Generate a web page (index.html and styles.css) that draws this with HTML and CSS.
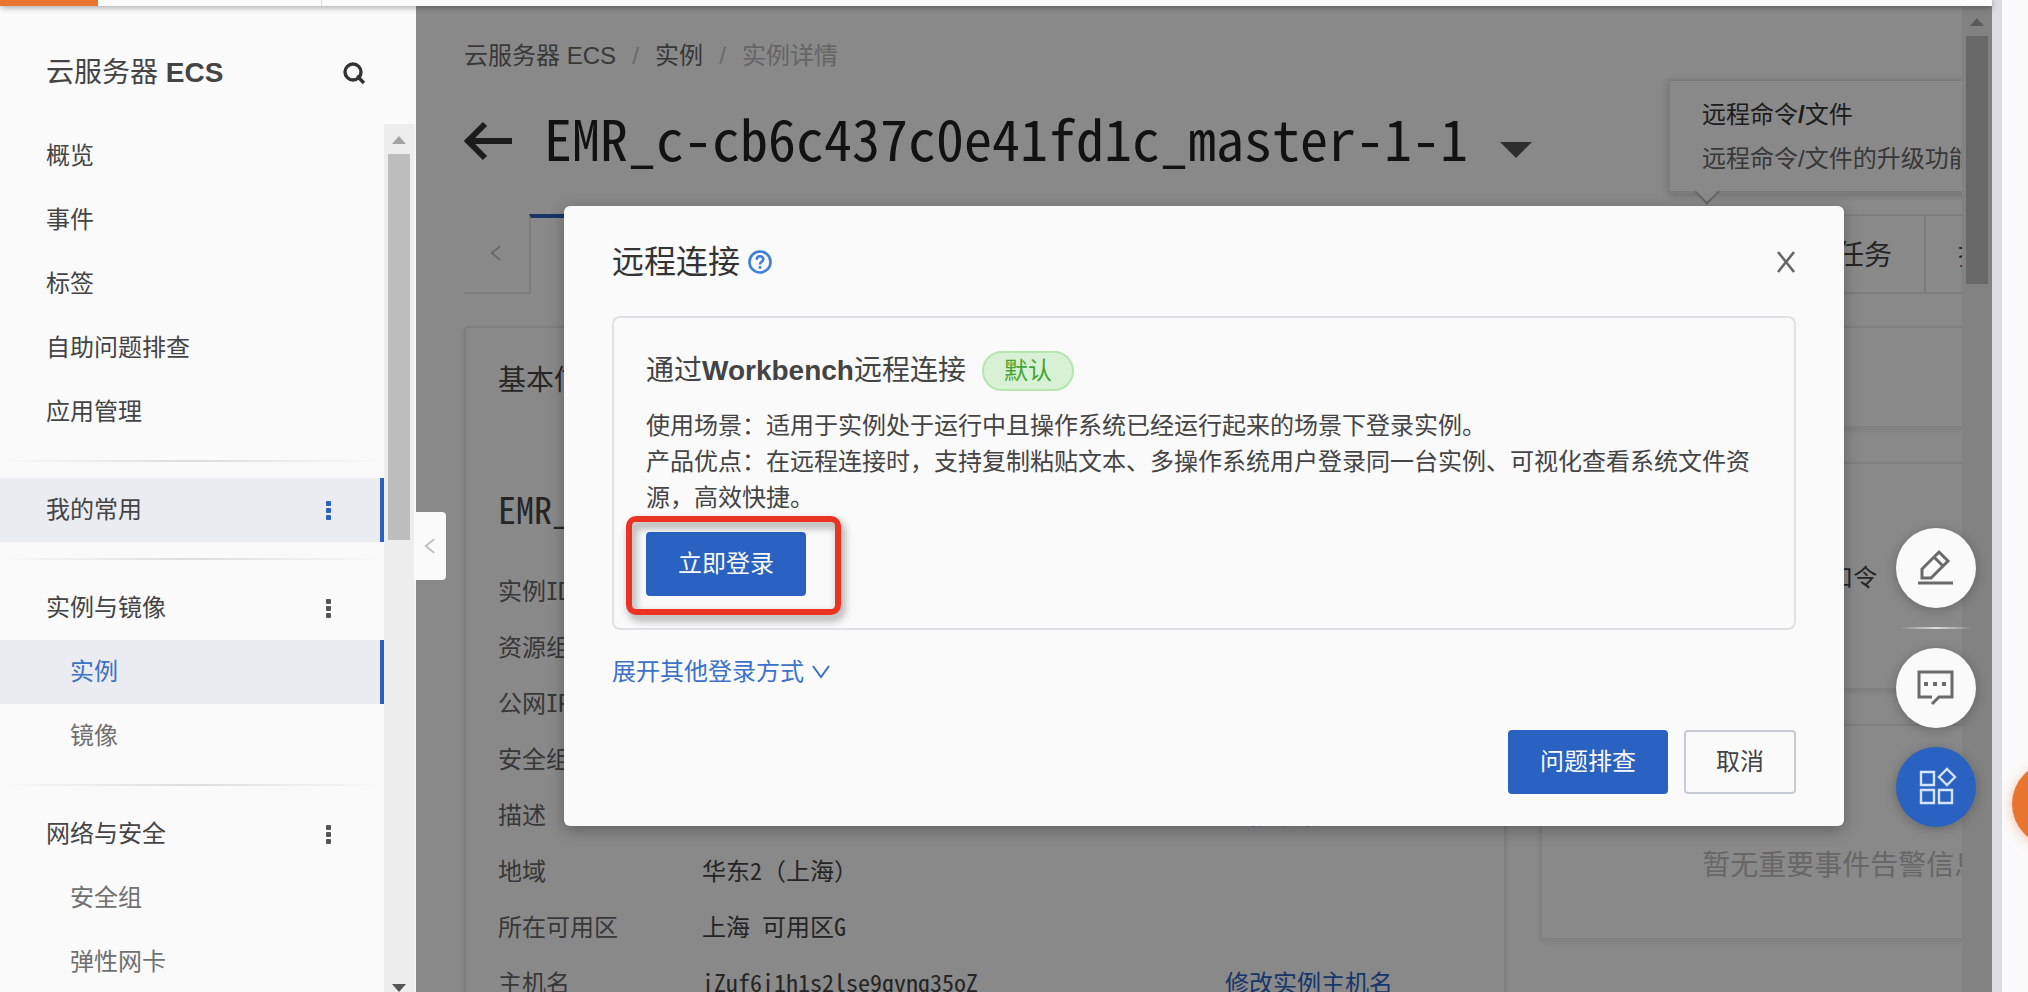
FILE: index.html
```html
<!DOCTYPE html>
<html lang="zh-CN">
<head>
  <meta charset="UTF-8">
  <meta name="viewport" content="width=device-width, initial-scale=1.0">
  <title>云服务器 ECS</title>
  <link rel="stylesheet" href="styles.css">
</head>
<body>
  <div class="topbar"><div class="topbar-brand"></div><div class="topbar-menu"></div></div>

  <div class="app">
    <aside class="sidebar">
      <div class="sidebar-header">
        <span>云服务器 <strong>ECS</strong></span>
        <button class="icon-btn" aria-label="搜索">
          <svg width="24" height="24" viewBox="0 0 24 24" fill="none" stroke="#333" stroke-width="3.4"><circle cx="11" cy="11" r="8"/><path d="M15 15l7 7"/></svg>
        </button>
      </div>
      <div class="sidebar-body">
        <nav class="menu">
          <div class="group">
            <a href="#" class="item">概览</a>
            <a href="#" class="item">事件</a>
            <a href="#" class="item">标签</a>
            <a href="#" class="item">自助问题排查</a>
            <a href="#" class="item">应用管理</a>
          </div>
          <div class="group">
            <a href="#" class="item active">我的常用<span class="dots"><i></i><i></i><i></i></span></a>
          </div>
          <div class="group">
            <a href="#" class="item">实例与镜像<span class="dots"><i></i><i></i><i></i></span></a>
            <a href="#" class="item sub active">实例</a>
            <a href="#" class="item sub">镜像</a>
          </div>
          <div class="group">
            <a href="#" class="item">网络与安全<span class="dots"><i></i><i></i><i></i></span></a>
            <a href="#" class="item sub">安全组</a>
            <a href="#" class="item sub">弹性网卡</a>
          </div>
        </nav>
        <div class="scrollbar">
          <span class="arrow-up"></span>
          <span class="thumb"></span>
          <span class="arrow-down"></span>
        </div>
      </div>
      <button class="collapse" aria-label="收起菜单">
        <svg width="12" height="16" viewBox="0 0 14 18" fill="none" stroke="#bbb" stroke-width="2"><path d="M12 1L2 9l10 8"/></svg>
      </button>
    </aside>

    <main class="main">
      <div class="page">
        <div class="content">
          <nav class="breadcrumb">
            <a href="#">云服务器 ECS</a><span class="slash">/</span><a href="#">实例</a><span class="slash">/</span><span class="current">实例详情</span>
          </nav>
          <div class="title-row">
            <button class="icon-btn" aria-label="返回">
              <svg width="50" height="40" viewBox="0 0 50 40" fill="none" stroke="#333" stroke-width="6"><path d="M48 21H5M21 4L4 21l17 17"/></svg>
            </button>
            <h1>EMR_c-cb6c437c0e41fd1c_master-1-1</h1>
            <span class="caret"></span>
          </div>

          <div class="tabs">
            <button class="tab-prev" aria-label="上一页">
              <svg width="12" height="16" viewBox="0 0 14 18" fill="none" stroke="#bbb" stroke-width="2"><path d="M12 1L2 9l10 8"/></svg>
            </button>
            <div class="tab selected"></div>
            <a href="#" class="tab">任务</a>
            <a href="#" class="tab tab-last">操作记录</a>
          </div>

          <div class="columns">
            <section class="card info">
              <h2>基本信息</h2>
              <h3>EMR_c-cb6c437c0e41fd1c_master-1-1</h3>
              <dl>
                <dt>实例ID</dt><dd></dd><dd></dd>
                <dt>资源组</dt><dd></dd><dd></dd>
                <dt>公网IP</dt><dd></dd><dd></dd>
                <dt>安全组</dt><dd></dd><dd></dd>
                <dt>描述</dt><dd></dd><dd class="action indent"><a href="#">修改描述</a></dd>
                <dt>地域</dt><dd>华东2（上海）</dd><dd></dd>
                <dt>所在可用区</dt><dd>上海 可用区G</dd><dd></dd>
                <dt>主机名</dt><dd>iZuf6i1h1s2lse9qvnq35oZ</dd><dd class="action"><a href="#">修改实例主机名</a></dd>
              </dl>
            </section>
            <div class="side">
              <section class="card card-small"></section>
              <section class="card card-password">口令</section>
              <section class="card card-events">暂无重要事件告警信息</section>
            </div>
          </div>
        </div>

        <div class="tooltip">
          <div class="tooltip-title">远程命令<b>/</b>文件</div>
          <div>远程命令/文件的升级功能</div>
        </div>
      </div>
      <div class="scrollbar main-scrollbar">
        <span class="arrow-up"></span>
        <span class="thumb"></span>
      </div>

      <div class="overlay">
        <div class="modal" role="dialog" aria-label="远程连接">
          <header class="modal-header">
            <span>远程连接</span>
            <svg width="24" height="24" viewBox="0 0 26 26" fill="none" stroke="#3f7dd8" stroke-width="2.8"><circle cx="13" cy="13" r="11.4"/><path d="M9.4 10.6c0-5 7.2-5 7.2-.6 0 2.8-3.6 2.6-3.6 5.6M13 17.4v2.8"/></svg>
            <button class="icon-btn modal-close" aria-label="关闭">
              <svg width="20" height="20" viewBox="0 0 20 20" fill="none" stroke="#666" stroke-width="2.6"><path d="M2 0l16 20M18 0L2 20"/></svg>
            </button>
          </header>

          <div class="method">
            <div class="method-title">通过<strong>Workbench</strong>远程连接<span class="badge">默认</span></div>
            <p>使用场景：适用于实例处于运行中且操作系统已经运行起来的场景下登录实例。</p>
            <p>产品优点：在远程连接时，支持复制粘贴文本、多操作系统用户登录同一台实例、可视化查看系统文件资源，高效快捷。</p>
            <div class="login">
              <button class="btn primary">立即登录</button>
              <span class="highlight"></span>
            </div>
          </div>

          <a href="#" class="more">展开其他登录方式
            <svg width="18" height="16" viewBox="0 0 18 16" fill="none" stroke="#3c71c8" stroke-width="2"><path d="M1 2l8 11 8-11"/></svg>
          </a>

          <footer class="modal-footer">
            <button class="btn primary">问题排查</button>
            <button class="btn">取消</button>
          </footer>
        </div>
      </div>

      <div class="float-tools">
        <button class="round" aria-label="反馈">
          <svg width="38" height="38" viewBox="0 0 38 38" fill="none" stroke="#6a6a6a" stroke-width="3"><path d="M1 34h35M5 29v-9L22 3l9 9-17 17zM17 8l9 9"/></svg>
        </button>
        <span class="float-line"></span>
        <button class="round" aria-label="咨询">
          <svg width="38" height="38" viewBox="0 0 38 38" fill="none" stroke="#6a6a6a" stroke-width="3"><path d="M15 28H2V3h33v25H22l-7 7"/><path d="M7 15h4M16 15h4M25 15h4" stroke-width="4"/></svg>
        </button>
        <button class="round blue" aria-label="应用">
          <svg width="38" height="38" viewBox="0 0 38 38" fill="none" stroke="#d6e4fa" stroke-width="2.4"><path d="M4 4h13v13H4zM4 22h13v13H4zM22 22h13v13H22zM30 1l8 8-8 8-8-8z"/></svg>
        </button>
      </div>
    </main>

    <div class="divider"></div>
    <div class="gutter"><span class="bubble"></span></div>
  </div>
</body>
</html>
```
FILE: styles.css
```css
* {
  box-sizing: border-box;
}
body {
  margin: 0;
  height: 100vh;
  overflow: hidden;
  display: flex;
  flex-direction: column;
  background: #fafafa;
  color: #444;
  font-family: "Liberation Sans", "Noto Sans CJK SC", sans-serif;
  font-size: 24px;
  line-height: 36px;
}
a {
  color: inherit;
  text-decoration: none;
}
h1, h2, h3, p, dl, dd {
  margin: 0;
  font-weight: normal;
}
button {
  font: inherit;
  color: inherit;
  cursor: pointer;
}
svg {
  display: block;
  overflow: visible;
}
.icon-btn {
  border: 0;
  padding: 0;
  background: none;
}

.topbar {
  position: relative;
  z-index: 5;
  flex: none;
  display: flex;
  height: 6px;
  margin-right: 36px;
  background: #fafafa;
  box-shadow: 0 1px 6px rgba(0, 0, 0, 0.4);
}
.topbar-brand {
  width: 98px;
  background: #e8742f;
}
.topbar-menu {
  width: 224px;
  border-right: 1px solid #ddd;
}
.app {
  flex: 1;
  min-height: 0;
  display: flex;
}

/* sidebar */
.sidebar {
  position: relative;
  z-index: 4;
  flex: none;
  width: 416px;
  display: flex;
  flex-direction: column;
  background: #fafafa;
}
.sidebar-header {
  flex: none;
  display: flex;
  align-items: center;
  justify-content: space-between;
  height: 118px;
  padding: 16px 50px 0 46px;
  font-size: 28px;
}
.sidebar-body {
  flex: 1;
  min-height: 0;
  display: flex;
}
.menu {
  flex: 1;
  overflow: hidden;
}
.group + .group {
  margin-top: 16px;
  padding-top: 18px;
  background: linear-gradient(to right, #fafafa, #ddd 50%, #fafafa) top / 100% 2px no-repeat;
}
.item {
  display: flex;
  align-items: center;
  justify-content: space-between;
  height: 64px;
  padding: 0 49px 0 46px;
  border-right: 4px solid transparent;
}
.item.sub {
  padding-left: 70px;
  color: #707070;
}
.item.active {
  background: #ebecf1;
  border-right-color: #2962c0;
}
.item.sub.active {
  color: #3c71c8;
}
.dots {
  display: grid;
  gap: 2px;
}
.dots i {
  width: 5px;
  height: 5px;
  border-radius: 1px;
  background: #555;
}
.active .dots i {
  background: #2962c0;
}
.scrollbar {
  flex: none;
  display: flex;
  flex-direction: column;
  align-items: center;
  width: 32px;
  padding-top: 12px;
  background: #ededed;
  border-right: 2px solid #f6f6f6;
}
.arrow-up, .arrow-down {
  flex: none;
  border: 7px solid transparent;
}
.arrow-up {
  border-top: 0;
  border-bottom: 8px solid #a3a3a3;
}
.arrow-down {
  margin-top: auto;
  border-bottom: 0;
  border-top: 8px solid #555;
}
.thumb {
  width: 22px;
  height: 386px;
  margin-top: 10px;
  background: #bdbdbd;
}
.collapse {
  position: absolute;
  left: 414px;
  top: 506px;
  display: flex;
  align-items: center;
  justify-content: center;
  width: 32px;
  height: 68px;
  padding: 0;
  border: 0;
  border-radius: 0 4px 4px 0;
  background: #fafafa;
}

/* instance page */
.main {
  position: relative;
  flex: 1;
  min-width: 0;
  display: flex;
}
.page {
  position: relative;
  flex: 1;
  min-width: 0;
  overflow: hidden;
}
.content {
  min-width: 1728px;
  padding: 32px 0 0 48px;
}
.breadcrumb {
  display: flex;
  color: #666;
}
.breadcrumb .slash {
  width: 39px;
  text-align: center;
  color: #c2c2c2;
}
.breadcrumb .current {
  color: #b8b8b8;
}
.title-row {
  display: flex;
  align-items: center;
  height: 64px;
  margin-top: 34px;
}
h1, .info {
  font-family: "Noto Sans Mono CJK SC", "Noto Sans CJK SC", monospace;
}
h1 {
  margin-left: 30px;
  padding-bottom: 6px;
  font-size: 56px;
  line-height: 64px;
  color: #222;
}
.caret {
  margin: 20px 0 0 32px;
  border: 16px solid transparent;
  border-top-color: #555;
  border-bottom: 0;
}
.tabs {
  display: flex;
  height: 80px;
  margin-top: 42px;
  font-size: 28px;
}
.tab-prev {
  display: flex;
  align-items: center;
  justify-content: center;
  width: 65px;
  padding: 0 18px 0 0;
  padding: 0 8px 0 6px;
  border: 0;
  border-bottom: 2px solid #e2e2e2;
  background: none;
}
.tab {
  display: flex;
  align-items: center;
  padding: 4px 32px 0;
  border: 2px solid #e2e2e2;
  border-left: 0;
}
.tab.selected {
  flex: 1;
  border-top: 4px solid #2962c0;
  border-bottom: 0;
  border-left: 2px solid #e2e2e2;
}
.tab-last {
  width: 218px;
}
.columns {
  display: grid;
  grid-template-columns: 19fr 11fr;
  gap: 34px;
  margin-top: 32px;
}
.card {
  border: 2px solid #e8e8e8;
  border-radius: 4px;
  box-shadow: 0 2px 6px rgba(0, 0, 0, 0.1);
}
.info {
  padding: 32px;
}
.info h2 {
  font-size: 28px;
  line-height: 36px;
}
.info h3 {
  margin-top: 88px;
  font-size: 36px;
  line-height: 48px;
}
.info dl {
  display: grid;
  grid-template-columns: 204px 523px auto;
  grid-auto-rows: 56px;
  align-items: center;
  margin-top: 30px;
}
.info dt {
  color: #666;
}
.action {
  color: #2962c0;
}
.indent {
  padding-left: 24px;
}
.side {
  display: flex;
  flex-direction: column;
  gap: 34px;
}
.card-small {
  height: 102px;
}
.card-password {
  height: 228px;
  padding: 96px 0 0 22px;
  text-align: center;
}
.card-events {
  height: 216px;
  padding-top: 122px;
  text-align: center;
  font-size: 28px;
  color: #bcbcbc;
}
.tooltip {
  position: absolute;
  left: 1252px;
  top: 73px;
  width: 420px;
  height: 114px;
  padding: 12px 32px;
  line-height: 44px;
  color: #666;
  background: #fafafa;
  border: 2px solid #e4e4e4;
  box-shadow: 0 2px 8px rgba(0, 0, 0, 0.2);
}
.tooltip-title {
  color: #333;
}
.tooltip::after {
  content: "";
  position: absolute;
  left: 28px;
  bottom: -10px;
  width: 16px;
  height: 16px;
  background: #fafafa;
  border: solid #bbb;
  border-width: 0 2px 2px 0;
  transform: rotate(45deg);
}
.main-scrollbar {
  width: 30px;
  border-right: 0;
}
.main-scrollbar .thumb {
  height: 248px;
}

/* dialog */
.overlay {
  position: absolute;
  inset: 0;
  display: flex;
  align-items: flex-start;
  justify-content: center;
  padding-top: 200px;
  background: rgba(0, 0, 0, 0.45);
}
.modal {
  width: 1280px;
  padding: 32px 48px;
  border-radius: 6px;
  background: #fafafa;
  box-shadow: 0 4px 16px rgba(0, 0, 0, 0.3);
}
.modal-header {
  display: flex;
  align-items: center;
  gap: 8px;
  height: 48px;
  margin-bottom: 30px;
  font-size: 32px;
  color: #333;
}
.modal-close {
  margin-left: auto;
}
.method {
  padding: 32px;
  border: 2px solid #e2e2e4;
  border-radius: 8px;
}
.method-title {
  display: flex;
  align-items: center;
  height: 42px;
  margin-bottom: 16px;
  font-size: 28px;
}
.badge {
  margin-left: 16px;
  padding: 0 20px;
  border: 2px solid #b5e6b0;
  border-radius: 20px;
  background: #d8f0d4;
  color: #3fa535;
  font-size: 24px;
}
.login {
  position: relative;
  width: fit-content;
  margin-top: 16px;
}
.highlight {
  position: absolute;
  inset: -16px -35px -19px -20px;
  border: 6px solid #eb3323;
  border-radius: 10px;
  filter: drop-shadow(3px 5px 4px rgba(0, 0, 0, 0.4));
  pointer-events: none;
}
.btn {
  display: block;
  height: 64px;
  padding: 0 30px;
  border: 2px solid #c6cad2;
  border-radius: 4px;
  background: #fafafa;
}
.btn.primary {
  border-color: #2962c0;
  background: #2962c0;
  color: #fafafa;
}
.more {
  display: flex;
  align-items: center;
  gap: 8px;
  width: fit-content;
  margin-top: 24px;
  color: #3c71c8;
}
.modal-footer {
  display: flex;
  justify-content: flex-end;
  gap: 16px;
  margin-top: 40px;
}

/* floating tools */
.float-tools {
  position: absolute;
  right: 16px;
  top: 522px;
  display: flex;
  flex-direction: column;
  align-items: center;
  gap: 19px;
}
.round {
  display: flex;
  align-items: center;
  justify-content: center;
  width: 80px;
  height: 80px;
  padding: 0;
  border: 0;
  border-radius: 50%;
  background: #fafafa;
  box-shadow: 0 2px 12px rgba(0, 0, 0, 0.25);
}
.round.blue {
  background: #2962c0;
}
.float-line {
  width: 72px;
  height: 2px;
  background: linear-gradient(to right, transparent, #ddd, transparent);
}
.divider {
  flex: none;
  width: 10px;
  margin-top: -6px;
  background: #dcdde3;
}
.gutter {
  position: relative;
  flex: none;
  width: 26px;
  overflow: hidden;
}
.bubble {
  position: absolute;
  left: 10px;
  top: 756px;
  width: 84px;
  height: 84px;
  border-radius: 50%;
  background: #e8742f;
  box-shadow: 0 2px 12px rgba(232, 116, 47, 0.4);
}
```
